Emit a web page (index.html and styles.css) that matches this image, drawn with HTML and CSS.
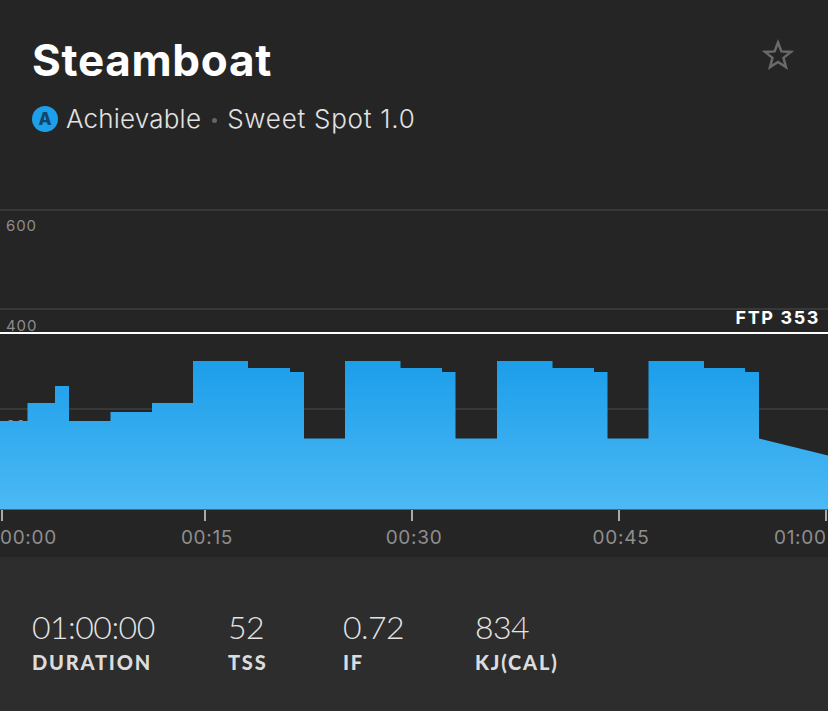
FILE: index.html
```html
<!DOCTYPE html>
<html lang="en">
<head>
<meta charset="utf-8">
<title>Steamboat</title>
<link rel="stylesheet" href="styles.css">
</head>
<body>
<main class="page">
  <header class="head">
    <div class="head-text">
      <h1 class="title">Steamboat</h1>
      <div class="sub">
        <span class="badge">A</span>
        <span class="sub-a">Achievable</span>
        <span class="dot"></span>
        <span class="sub-b">Sweet Spot 1.0</span>
      </div>
    </div>
    <svg class="star" width="32" height="32" viewBox="0 0 32 32" aria-label="Favorite">
      <path class="star-path" d="M16 3.5l3.4 8.900 9.500.5-7.400 6 2.500 9.200-8-5.200-8 5.200 2.500-9.200-7.400-6 9.500-.5z"/>
    </svg>
  </header>
  <svg class="chart" width="828" height="352" viewBox="0 205 828 352">
    <defs>
      <linearGradient id="fill" x1="0" y1="361" x2="0" y2="509" gradientUnits="userSpaceOnUse">
        <stop offset="0" stop-color="#1c9eea"/>
        <stop offset="1" stop-color="#4cb9f4"/>
      </linearGradient>
    </defs>
    <rect class="grid" x="0" y="209" width="828" height="2"/>
    <rect class="grid" x="0" y="308" width="828" height="2"/>
    <rect class="grid" x="0" y="408" width="828" height="2"/>
    <text class="ylabel" x="6" y="231">600</text>
    <text class="ylabel" x="6" y="331">400</text>
    <text class="ylabel" x="6" y="431">200</text>
    <polygon fill="url(#fill)" points="0,421 27.500,421 27.500,403 55,403 55,386 69,386 69,421 110.500,421 110.500,412 152,412 152,403 193,403 193,361 248,361 248,368 290,368 290,372 304,372 304,438.500 345,438.500 345,361 400.500,361 400.500,368 442,368 442,372 455.500,372 455.500,438.500 497,438.500 497,361 552.500,361 552.500,368 594,368 594,372 607.500,372 607.500,438.500 648.500,438.500 648.500,361 704,361 704,368 745,368 745,372 759,372 759,438.500 828,455.500 828,509.500 0,509.500"/>
    <rect class="ftp-line" x="0" y="332" width="828" height="2"/>
    <text class="ftp" x="820" y="324" text-anchor="end">FTP 353</text>
    <rect class="tick" x="1" y="510" width="2" height="11"/>
    <rect class="tick" x="204" y="510" width="2" height="11"/>
    <rect class="tick" x="411" y="510" width="2" height="11"/>
    <rect class="tick" x="618" y="510" width="2" height="11"/>
    <rect class="tick" x="825" y="510" width="2" height="11"/>
    <text class="xlabel" x="0" y="544">00:00</text>
    <text class="xlabel" x="207" y="544" text-anchor="middle">00:15</text>
    <text class="xlabel" x="414" y="544" text-anchor="middle">00:30</text>
    <text class="xlabel" x="621" y="544" text-anchor="middle">00:45</text>
    <text class="xlabel" x="774" y="544">01:00</text>
  </svg>
  <section class="stats">
    <div class="stat"><div class="value">01:00:00</div><div class="label">DURATION</div></div>
    <div class="stat"><div class="value">52</div><div class="label">TSS</div></div>
    <div class="stat"><div class="value">0.72</div><div class="label">IF</div></div>
    <div class="stat"><div class="value">834</div><div class="label">KJ(CAL)</div></div>
  </section>
</main>
</body>
</html>
```
FILE: styles.css
```css
html, body {
  margin: 0;
  padding: 0;
  background: #252525;
}
.page {
  width: 828px;
  height: 711px;
  display: flex;
  flex-direction: column;
  overflow: hidden;
  font-family: "Inter", "Lato", sans-serif;
  background: #252525;
}
.head {
  height: 205px;
  box-sizing: border-box;
  padding: 33px 34px 0 32px;
  display: flex;
  justify-content: space-between;
  align-items: flex-start;
}
.title {
  margin: 0;
  font-size: 44px;
  line-height: 54px;
  font-weight: 700;
  letter-spacing: 0.7px;
  color: #fff;
}
.sub {
  margin-top: 16px;
  display: flex;
  align-items: center;
  font-size: 26px;
  line-height: 32px;
  font-weight: 300;
  color: #e2e2e2;
}
.sub-a {
  letter-spacing: 0.2px;
}
.sub-b {
  letter-spacing: 0.75px;
}
.badge {
  width: 26px;
  height: 26px;
  border-radius: 50%;
  background: #1d9fea;
  color: #10466b;
  font-size: 17px;
  font-weight: 800;
  line-height: 26px;
  text-align: center;
  margin-right: 8px;
}
.dot {
  width: 5px;
  height: 5px;
  border-radius: 50%;
  background: #666;
  margin: 2px 10px 0 11px;
}
.star {
  margin-top: 6px;
}
.star-path {
  fill: none;
  stroke: #6a6a6a;
  stroke-width: 2.500;
}
.chart {
  display: block;
  flex: none;
}
.grid { fill: #383838; }
.ftp-line { fill: #fff; }
.tick { fill: #aaa; }
.ylabel {
  font-family: "Inter", sans-serif;
  font-size: 15px;
  letter-spacing: 0.9px;
  fill: #8c8c8c;
}
.xlabel {
  font-family: "Inter", sans-serif;
  font-size: 19px;
  letter-spacing: 0.7px;
  fill: #8e8e8e;
}
.ftp {
  font-family: "Inter", sans-serif;
  font-size: 18px;
  font-weight: 700;
  letter-spacing: 1.6px;
  fill: #fff;
}
.stats {
  flex: 1;
  background: #2d2d2d;
  box-sizing: border-box;
  padding: 51px 0 0 32px;
  display: grid;
  grid-template-columns: 196px 115px 132px auto;
  align-content: start;
}
.value {
  font-family: "Lato", sans-serif;
  font-size: 32px;
  line-height: 38px;
  font-weight: 300;
  letter-spacing: -0.5px;
  color: #e4e4e4;
}
.label {
  font-family: "Lato", sans-serif;
  font-size: 20px;
  line-height: 26px;
  font-weight: 900;
  letter-spacing: 1.8px;
  color: #dcdcdc;
  margin-top: 3px;
}
```
